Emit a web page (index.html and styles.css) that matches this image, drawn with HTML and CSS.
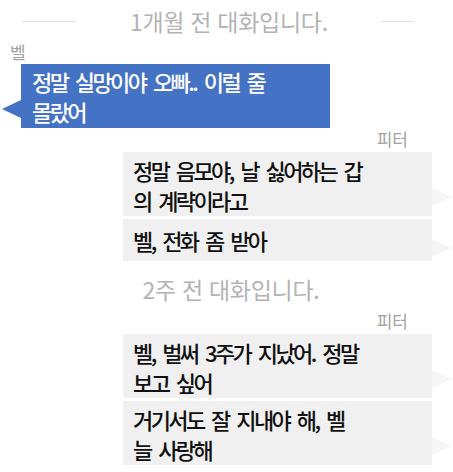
FILE: index.html
```html
<!DOCTYPE html>
<html lang="ko">
<head>
    <meta charset="UTF-8">
    <meta name="viewport" content="width=device-width, initial-scale=1.0">
    <title>대화 기록</title>
    <link rel="stylesheet" href="styles.css">
</head>
<body>
    <div class="chat">
        <div class="divider divider-lined">
            <span class="rule rule-left"></span>
            <span class="divider-text">1개월 전 대화입니다.</span>
            <span class="rule rule-right"></span>
        </div>

        <div class="sender sender-left">벨</div>
        <div class="bubble bubble-in">정말 실망이야 오빠.. 이럴 줄<br>몰랐어</div>

        <div class="sender sender-right">피터</div>
        <div class="bubble bubble-out">정말 음모야, 날 싫어하는 갑<br>의 계략이라고</div>
        <div class="bubble bubble-out single">벨, 전화 좀 받아</div>

        <div class="divider divider-plain">
            <span class="divider-text">2주 전 대화입니다.</span>
        </div>

        <div class="sender sender-right">피터</div>
        <div class="bubble bubble-out">벨, 벌써 3주가 지났어. 정말<br>보고 싶어</div>
        <div class="bubble bubble-out">거기서도 잘 지내야 해, 벨<br>늘 사랑해</div>
    </div>
</body>
</html>
```

FILE: styles.css
```css
:root {
    --blue: #4472c4;
    --grey-bubble: #f0f0f0;
    --grey-tail: #f6f6f6;
    --label: #a3a3a3;
    --note: #b3b3b3;
    --text: #111;
}

* {
    box-sizing: border-box;
    margin: 0;
    padding: 0;
}

body {
    background: #fff;
    color: var(--text);
    font-family: 'Noto Sans CJK KR', 'Noto Sans', sans-serif;
    width: 453px;
}

.chat {
    display: flex;
    flex-direction: column;
}

/* date separators */
.divider {
    display: flex;
    align-items: center;
    color: var(--note);
    font-size: 23px;
    letter-spacing: -0.3px;
    white-space: nowrap;
}

.divider-lined {
    height: 42px;
    padding-left: 22px;
}

.divider-plain {
    justify-content: center;
    padding: 4px 0 0 9px;
    height: 46px;
}

.rule {
    height: 1px;
    background: #e3e3e3;
}

.rule-left {
    width: 54px;
    margin-right: 54px;
}

.rule-right {
    width: 33px;
    margin-left: 53px;
}

/* sender names */
.sender {
    color: var(--label);
    font-size: 17px;
    line-height: 22px;
}

.sender-left {
    padding-left: 10px;
    line-height: 20px;
}

.sender-right {
    align-self: flex-end;
    margin-right: 45px;
    margin-bottom: 2px;
}

/* message bubbles */
.bubble {
    position: relative;
    width: 309px;
    font-size: 22px;
    font-weight: 500;
    line-height: 30px;
    letter-spacing: -2.6px;
    word-spacing: 4px;
    white-space: nowrap;
}

.bubble::after {
    content: '';
    position: absolute;
    top: 70%;
    width: 0;
    height: 0;
    border-top: 9px solid transparent;
    border-bottom: 9px solid transparent;
    transform: translateY(-50%);
}

.bubble-in {
    margin: 2px 0 0 21px;
    padding: 2px 0 2px 11px;
    background: var(--blue);
    color: #fff;
}

.bubble-in::after {
    left: -19px;
    border-right: 19px solid var(--blue);
}

.bubble-out {
    margin-left: 123px;
    margin-bottom: 3px;
    padding: 3px 0 1px 10px;
    background: var(--grey-bubble);
}

.bubble-out.single {
    padding: 6px 0 6px 10px;
}

.bubble-out::after {
    right: -20px;
    border-left: 20px solid var(--grey-tail);
}
```
